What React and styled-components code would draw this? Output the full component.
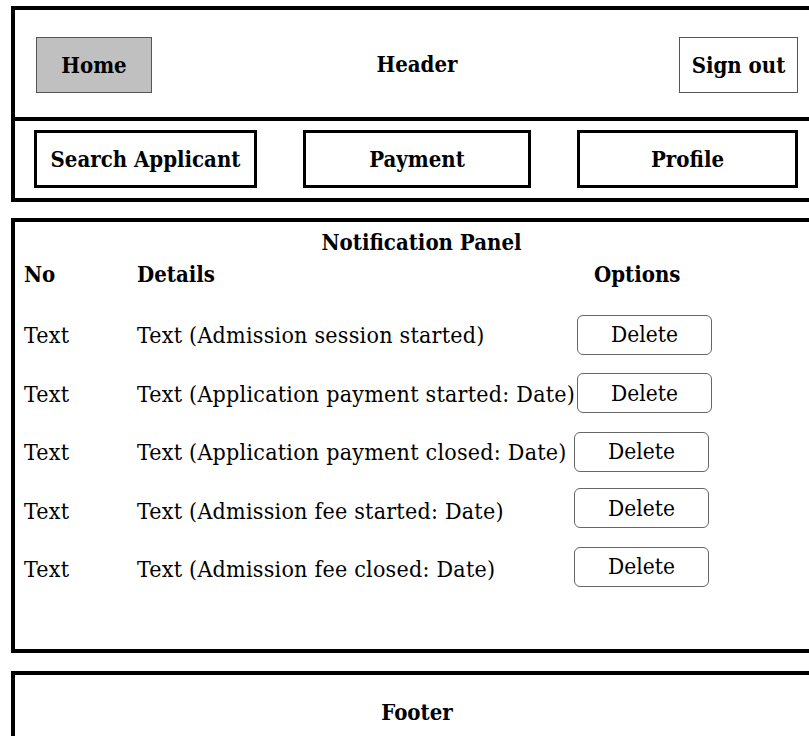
import React from 'react'
import styled, { createGlobalStyle } from 'styled-components'

const GlobalStyle = createGlobalStyle`
    html, body {
        margin: 0;
        padding: 0;
        overflow: hidden;
        background: #fff;
    }
    body {
        font-family: "DejaVu Serif Condensed", "DejaVu Serif", "Liberation Serif", serif;
        font-stretch: condensed;
        color: #000;
    }
`

const Page = styled.div`
    display: flex;
    flex-direction: column;
    width: 812px;
    padding: 6px 0 0 11px;
`
const Frame = styled.section`
    border: 4px solid #000;
    background: #fff;
    margin-bottom: ${p => p.gap || 0}px;
`
const TopBar = styled.div`
    display: grid;
    grid-template-columns: 1fr auto 1fr;
    align-items: center;
    height: 107px;
    padding: 0 21px;
    border-bottom: 4px solid #000;
`
const Title = styled.div`
    font-weight: 700;
    font-size: 22px;
    text-align: center;
    line-height: 28px;
`
const TopButton = styled.div`
    display: flex;
    align-items: center;
    justify-content: center;
    width: ${p => p.w}px;
    height: 56px;
    box-sizing: border-box;
    border: 1px solid #555;
    background: ${p => (p.active ? '#c0c0c0' : '#fff')};
    font-weight: 700;
    font-size: 22px;
    justify-self: ${p => p.side};
    margin-top: 3px;
`
const NavBar = styled.nav`
    display: grid;
    grid-template-columns: 223px 228px 221px;
    column-gap: 46px;
    height: 77px;
    padding: 9px 0 0 19px;
    box-sizing: border-box;
`
const NavButton = styled.div`
    display: flex;
    align-items: center;
    justify-content: center;
    height: 58px;
    box-sizing: border-box;
    border: 3px solid #000;
    font-weight: 700;
    font-size: 22px;
`
const Panel = styled(Frame)`
    height: 435px;
    box-sizing: border-box;
    padding: 6px 0 0 9px;
`
const HeadRow = styled.div`
    display: flex;
    align-items: center;
    height: 28px;
    margin-top: 4px;
    margin-bottom: 18px;
    font-weight: 700;
    font-size: 22px;
`
const Row = styled.div`
    display: flex;
    align-items: center;
    height: 58.5px;
    font-size: 23px;
    letter-spacing: 0.25px;
    white-space: nowrap;
`
const NoCol = styled.div`
    width: 113px;
    flex: none;
`
const DetailCol = styled.div`
    width: ${p => p.w}px;
    flex: none;
`
const DeleteButton = styled.div`
    display: flex;
    align-items: center;
    justify-content: center;
    width: 135px;
    height: 40px;
    box-sizing: border-box;
    border: 1px solid #666;
    border-radius: 6px;
    font-size: 22.5px;
    letter-spacing: 0;
    padding-bottom: 1px;
    margin-top: ${p => (p.up ? -5 : -1)}px;
`
const Footer = styled(Frame)`
    height: 120px;
    padding-top: 23px;
`

const rows = [
    { detail: 'Text (Admission session started)', shift: 0 },
    { detail: 'Text (Application payment started: Date)', shift: 0 },
    { detail: 'Text (Application payment closed: Date)', shift: 3 },
    { detail: 'Text (Admission fee started: Date)', shift: 3, up: true },
    { detail: 'Text (Admission fee closed: Date)', shift: 3, up: true },
]

const App = () => {
    return (
        <Page>
            <GlobalStyle />
            <Frame gap={16}>
                <TopBar>
                    <TopButton active w={116} side="start">Home</TopButton>
                    <Title>Header</Title>
                    <TopButton w={119} side="end">Sign out</TopButton>
                </TopBar>
                <NavBar>
                    <NavButton>Search Applicant</NavButton>
                    <NavButton>Payment</NavButton>
                    <NavButton>Profile</NavButton>
                </NavBar>
            </Frame>

            <Panel gap={18}>
                <Title>Notification Panel</Title>
                <HeadRow>
                    <NoCol>No</NoCol>
                    <DetailCol w={457}>Details</DetailCol>
                    <span>Options</span>
                </HeadRow>
                {rows.map((r, i) => (
                    <Row key={i}>
                        <NoCol>Text</NoCol>
                        <DetailCol w={440 - r.shift}>{r.detail}</DetailCol>
                        <DeleteButton up={r.up}>Delete</DeleteButton>
                    </Row>
                ))}
            </Panel>

            <Footer>
                <Title>Footer</Title>
            </Footer>
        </Page>
    )
}

export default App
